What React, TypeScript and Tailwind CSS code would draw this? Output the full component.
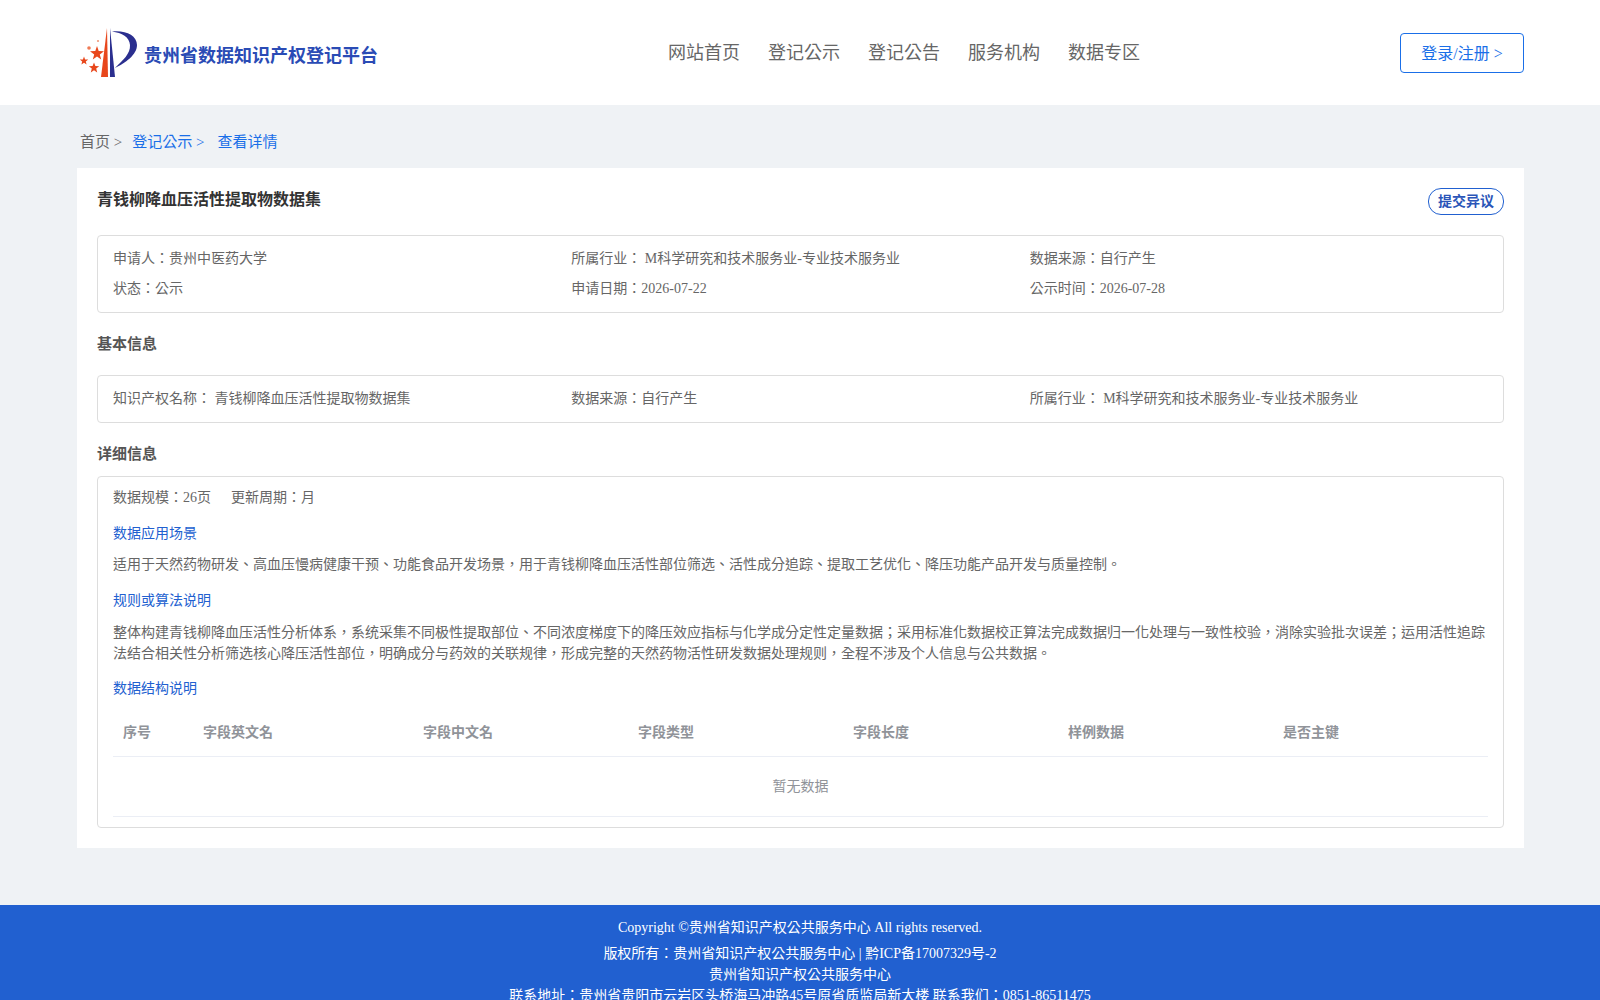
const navItems = ["网站首页", "登记公示", "登记公告", "服务机构", "数据专区"]
const columns = ["序号", "字段英文名", "字段中文名", "字段类型", "字段长度", "样例数据", "是否主键"]

function Logo() {
  return (
    <svg width="60" height="52" viewBox="0 0 60 52" className="shrink-0">
      <path d="M29 1 L30 50 L23 50 Z" fill="#e8471c" />
      <path d="M32 1 L37 50 L32 50 Z" fill="#2b2f8f" />
      <path d="M34 4.5 C47 3 59 8 59 18 C59 28 47 36 37 41 C45 33 52.5 27 52 18 C51.5 10 44 6 34 4.5 Z" fill="#2b2f8f" />
      <polygon points="19,19 20.7,24 26,24.2 21.8,27.4 23.2,32.5 19,29.6 14.8,32.5 16.2,27.4 12,24.2 17.3,24" fill="#e8471c" />
      <polygon points="6,29.5 7.1,32.4 10.2,32.5 7.8,34.4 8.6,37.4 6,35.7 3.4,37.4 4.2,34.4 1.8,32.5 4.9,32.4" fill="#e8471c" />
      <polygon points="16,35.5 17.4,39 21.2,39.2 18.2,41.6 19.2,45.4 16,43.2 12.8,45.4 13.8,41.6 10.8,39.2 14.6,39" fill="#e8471c" />
      <circle cx="11" cy="21" r="1.8" fill="#ef7a55" />
      <circle cx="20" cy="14" r="1.1" fill="#ef9a7d" />
    </svg>
  )
}

function Info({ children }: { children: React.ReactNode }) {
  return <div className="h-[30px] leading-[30px]">{children}</div>
}

function SectionLabel({ children }: { children: React.ReactNode }) {
  return <div className="text-[14px] leading-[21px] text-[#2160d0]">{children}</div>
}

export default function App() {
  return (
    <div className="min-h-screen bg-[#eff2f5] font-['Liberation_Serif','Noto_Sans_CJK_TC',serif] text-[14px] text-[#666]">
      <header className="flex h-[105px] items-center bg-white pl-[78px] pr-[76px]">
        <div className="flex w-[590px] shrink-0 items-center">
          <Logo />
          <span className="ml-[6px] pt-[8px] text-[18px] font-bold text-[#2a4bb5]">贵州省数据知识产权登记平台</span>
        </div>
        <nav className="flex gap-[28px] pt-[2px] text-[18px] text-[#666]">
          {navItems.map((item) => (
            <a key={item} href="#">{item}</a>
          ))}
        </nav>
        <button className="ml-auto h-[40px] w-[124px] rounded-[4px] border border-[#1a6fe8] pt-[2px] text-[16px] text-[#1a6fe8]">
          登录/注册 &gt;
        </button>
      </header>

      <main className="pl-[77px] pr-[76px]">
        <div className="flex h-[63px] items-center pl-[3px] pt-[11px] text-[15px]">
          <span className="mr-[10px]">首页 &gt;</span>
          <span className="mr-[13px] text-[#1a6fe8]">登记公示 &gt;</span>
          <span className="text-[#1a6fe8]">查看详情</span>
        </div>

        <div className="bg-white px-[20px] pb-[20px] pt-[20px]">
          <div className="flex h-[27px] items-center justify-between">
            <h1 className="pb-[3px] text-[16px] font-bold text-[#333]">青钱柳降血压活性提取物数据集</h1>
            <button className="h-[27px] w-[76px] rounded-[13px] border border-[#2160d0] text-[14px] font-bold text-[#2a55b8]">
              提交异议
            </button>
          </div>

          <div className="mt-[20px] rounded-[4px] border border-[#ddd] px-[15px] py-[8px]">
            <div className="grid grid-cols-3">
              <Info>申请人：贵州中医药大学</Info>
              <Info>所属行业： M科学研究和技术服务业-专业技术服务业</Info>
              <Info>数据来源：自行产生</Info>
              <Info>状态：公示</Info>
              <Info>申请日期：2026-07-22</Info>
              <Info>公示时间：2026-07-28</Info>
            </div>
          </div>

          <h2 className="mt-[20px] text-[15px] font-bold leading-[22px] text-[#555]">基本信息</h2>
          <div className="mt-[20px] rounded-[4px] border border-[#ddd] px-[15px] py-[8px]">
            <div className="grid grid-cols-3">
              <Info>知识产权名称： 青钱柳降血压活性提取物数据集</Info>
              <Info>数据来源：自行产生</Info>
              <Info>所属行业： M科学研究和技术服务业-专业技术服务业</Info>
            </div>
          </div>

          <h2 className="mt-[20px] text-[15px] font-bold leading-[22px] text-[#555]">详细信息</h2>
          <div className="mt-[11px] rounded-[4px] border border-[#ddd] px-[15px] pb-[10px] pt-[10px] leading-[21px]">
            <div className="flex gap-[20px]">
              <span>数据规模：26页</span>
              <span>更新周期：月</span>
            </div>
            <div className="mt-[15px]">
              <SectionLabel>数据应用场景</SectionLabel>
            </div>
            <p className="mt-[10px]">
              适用于天然药物研发、高血压慢病健康干预、功能食品开发场景，用于青钱柳降血压活性部位筛选、活性成分追踪、提取工艺优化、降压功能产品开发与质量控制。
            </p>
            <div className="mt-[15px]">
              <SectionLabel>规则或算法说明</SectionLabel>
            </div>
            <p className="mt-[11px]">
              整体构建青钱柳降血压活性分析体系，系统采集不同极性提取部位、不同浓度梯度下的降压效应指标与化学成分定性定量数据；采用标准化数据校正算法完成数据归一化处理与一致性校验，消除实验批次误差；运用活性追踪法结合相关性分析筛选核心降压活性部位，明确成分与药效的关联规律，形成完整的天然药物活性研发数据处理规则，全程不涉及个人信息与公共数据。
            </p>
            <div className="mt-[14px]">
              <SectionLabel>数据结构说明</SectionLabel>
            </div>

            <div className="mt-[11px]">
              <div className="grid h-[47px] grid-cols-[80px_220px_repeat(5,1fr)] items-center border-b border-[#ebeef5] pb-[1px] font-bold text-[#909399]">
                {columns.map((col) => (
                  <div key={col} className="px-[10px]">{col}</div>
                ))}
              </div>
              <div className="flex h-[60px] items-center justify-center border-b border-[#ebeef5] text-[#909399]">
                暂无数据
              </div>
            </div>
          </div>
        </div>
      </main>

      <footer className="mt-[57px] bg-[#2160d0] pb-[10px] pt-[12px] text-center text-[14px] leading-[21px] text-white">
        <div className="mb-[5px]">Copyright ©贵州省知识产权公共服务中心 All rights reserved.</div>
        <div>版权所有：贵州省知识产权公共服务中心 | 黔ICP备17007329号-2</div>
        <div>贵州省知识产权公共服务中心</div>
        <div>联系地址：贵州省贵阳市云岩区头桥海马冲路45号原省质监局新大楼 联系我们：0851-86511475</div>
      </footer>
    </div>
  )
}
